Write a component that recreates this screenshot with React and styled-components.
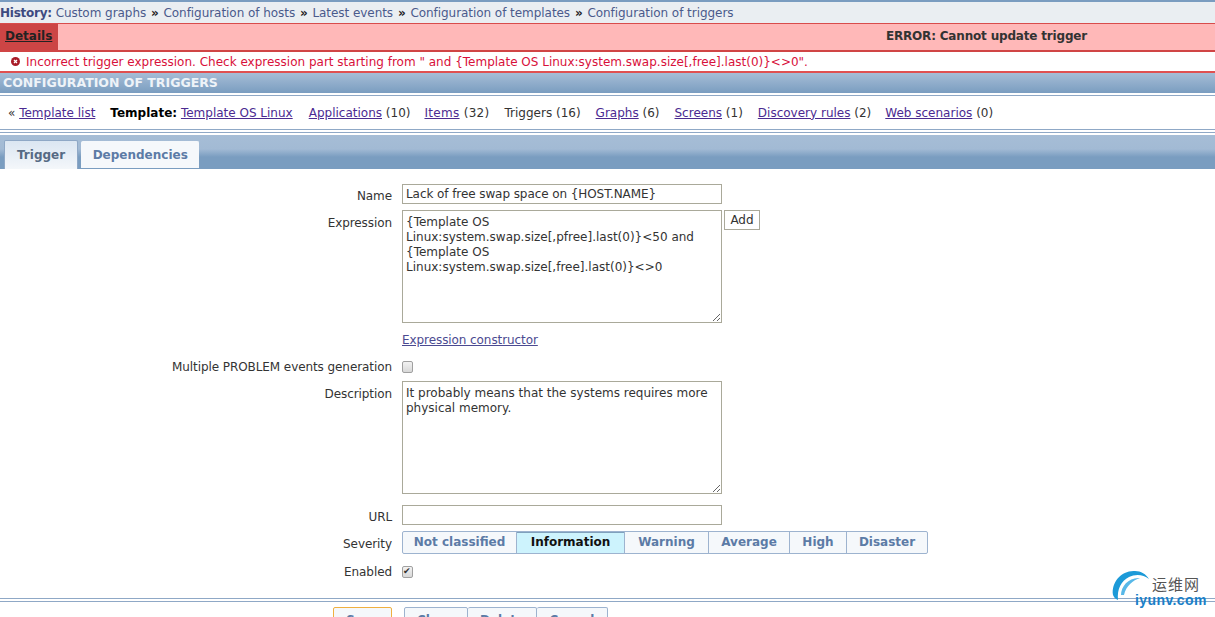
import styled, { createGlobalStyle } from "styled-components";

const GlobalStyle = createGlobalStyle`
    html, body {
        margin: 0;
        padding: 0;
        height: 617px;
        overflow: hidden;
        background: #fff;
    }
    body {
        font-family: "DejaVu Sans", Verdana, sans-serif;
        font-size: 12px;
        color: #333;
    }
`;

const Page = styled.div`
    position: relative;
    width: 1215px;
    height: 617px;
    overflow: hidden;
`;

const History = styled.div`
    height: 21px;
    border-top: 2px solid #7a9cc0;
    background: #eaeef2;
    display: flex;
    align-items: center;
    gap: 4.8px;
    color: #4a5a8c;
    white-space: nowrap;
    letter-spacing: -0.05px;
    b {
        color: #3d4a80;
        letter-spacing: -0.25px;
        margin-right: -1px;
    }
    i {
        font-style: normal;
        font-weight: bold;
        color: #222;
    }
`;

const ErrorBar = styled.div`
    height: 26px;
    display: flex;
    justify-content: space-between;
    align-items: stretch;
    background: #ffb8b8;
    border-top: 1px solid #d84c4c;
    border-bottom: 2px solid #d04545;
    font-weight: bold;
    color: #333;
`;

const Details = styled.a`
    width: 58px;
    box-sizing: border-box;
    padding-left: 5px;
    background: #cc4545;
    color: #222;
    line-height: 25px;
    text-decoration: underline;
`;

const ErrorTitle = styled.span`
    line-height: 25px;
    letter-spacing: -0.18px;
    margin-right: 128px;
`;

const ErrorMessage = styled.div`
    height: 19px;
    display: flex;
    align-items: center;
    gap: 6px;
    padding-left: 11px;
    border-bottom: 2px solid #e05050;
    color: #d8103a;
    white-space: nowrap;
`;

const Title = styled.div`
    height: 20px;
    padding-left: 3px;
    background: linear-gradient(#a6bdd6, #7a9dc0);
    color: #eef3f8;
    font-weight: bold;
    font-size: 12.5px;
    line-height: 19px;
`;

const Crumbs = styled.div`
    height: 33px;
    margin-top: 2px;
    border-top: 1px solid #8fa8c6;
    border-bottom: 1px solid #8fa8c6;
    display: flex;
    align-items: center;
    padding-left: 8px;
    color: #333;
    white-space: nowrap;
    a {
        color: #4b2a91;
        text-decoration: underline;
    }
`;

const CrumbGroup = styled.span`
    margin-right: ${props => props.$gap || 15}px;
    letter-spacing: ${props => props.$track || 0}px;
    b {
        color: #000;
    }
`;

const TabRule = styled.div`
    margin-top: 2px;
    margin-bottom: 2px;
    height: 1px;
    background: #8fa8c6;
`;

const TabBar = styled.div`
    height: 34px;
    background: linear-gradient(#a6bdd6 0, #a2bad4 14px, #7a9dc0 22px, #7a9dc0 100%);
    display: flex;
    align-items: flex-end;
    gap: 3px;
    padding-left: 4px;
    box-sizing: border-box;
`;

const Tab = styled.div`
    height: ${props => props.$active ? 29 : 27}px;
    margin-bottom: ${props => props.$active ? 0 : 1}px;
    box-sizing: border-box;
    padding: 0 ${props => props.$active ? 12 : 10.5}px;
    border-radius: 2px 2px 0 0;
    background: ${props => props.$active ? "linear-gradient(#dbe6f2, #f4f7fa)" : "#f5f8fb"};
    border: 1px solid ${props => props.$active ? "#8fa8c6" : "#f5f8fb"};
    border-bottom: none;
    color: ${props => props.$active ? "#566a84" : "#5c7ba6"};
    font-weight: bold;
    line-height: ${props => props.$active ? 28 : 26}px;
`;

const Form = styled.div`
    display: grid;
    grid-template-columns: 392px 1fr;
    column-gap: 10px;
    padding-top: 15px;
`;

const Label = styled.div`
    text-align: right;
    height: ${props => props.$h}px;
    padding-top: ${props => props.$top || 0}px;
    box-sizing: border-box;
    color: #333;
    white-space: nowrap;
    letter-spacing: -0.08px;
`;

const Cell = styled.div`
    height: ${props => props.$h}px;
    display: flex;
    align-items: flex-start;
`;

const TextInput = styled.input`
    width: 320px;
    height: 20px;
    box-sizing: border-box;
    border: 1px solid #aaa99a;
    padding: 0 3px;
    margin: 0;
    font: 12px "DejaVu Sans", Verdana, sans-serif;
    letter-spacing: -0.08px;
    color: #333;
    outline: none;
`;

const TextArea = styled.textarea`
    width: 320px;
    height: 113px;
    box-sizing: border-box;
    border: 1px solid #aaa99a;
    padding: 4px 3px;
    margin: 0;
    font: 12px/15px "DejaVu Sans", Verdana, sans-serif;
    color: #333;
    outline: none;
`;

const AddButton = styled.button`
    width: 36px;
    height: 20px;
    margin-left: 2px;
    padding: 0;
    box-sizing: border-box;
    background: #fff;
    border: 1px solid #aaa99a;
    font: 12px "DejaVu Sans", Verdana, sans-serif;
    color: #333;
`;

const ConstructorLink = styled.a`
    color: #4b4a91;
    text-decoration: underline;
    padding-top: 3px;
    letter-spacing: -0.08px;
`;

const Check = styled.input.attrs({ type: "checkbox" })`
    appearance: none;
    position: relative;
    width: 11px;
    height: 12px;
    box-sizing: border-box;
    margin: ${props => props.$top || 1}px 0 0;
    border: 1px solid #a0a0a0;
    border-radius: 2px;
    background: linear-gradient(#f2f2f2, #d8d8d8);
    &:checked::after {
        content: "✔";
        position: absolute;
        left: 0;
        top: -1px;
        font-size: 9px;
        line-height: 11px;
        color: #333;
    }
`;

const Segments = styled.div`
    display: flex;
    height: 23px;
    box-sizing: border-box;
    border: 1px solid #9db3cf;
    border-radius: 2px;
    background: #f5f8fb;
`;

const Segment = styled.div`
    width: ${props => props.$w}px;
    box-sizing: border-box;
    text-align: center;
    line-height: 20px;
    font-weight: bold;
    color: ${props => props.$active ? "#111" : "#5c7ba6"};
    background: ${props => props.$active ? "#cdf3fd" : "transparent"};
    border-right: 1px solid #9db3cf;
    ${props => props.$active && "box-shadow: inset 0 1px 0 #7fa0bc;"}
    &:last-child {
        border-right: none;
    }
`;

const FooterRule = styled.div`
    margin-top: 19px;
    height: 2px;
    border-top: 1px solid #8fa8c6;
    border-bottom: 1px solid #8fa8c6;
`;

const Footer = styled.div`
    display: flex;
    margin-top: 5px;
    padding-left: 333px;
`;

const FootButton = styled.div`
    height: 30px;
    width: ${props => props.$w}px;
    box-sizing: border-box;
    border: 1px solid ${props => props.$focus ? "#f0b040" : "#9db3cf"};
    border-left-width: ${props => props.$joined ? 0 : 1}px;
    margin-left: ${props => props.$space || 0}px;
    border-radius: 2px 2px 0 0;
    background: #f5f8fb;
    color: #5c7ba6;
    font-weight: bold;
    text-align: center;
    line-height: 24px;
`;

const Watermark = styled.div`
    position: absolute;
    left: 1111px;
    top: 569px;
    width: 104px;
    height: 44px;
`;

const WatermarkCn = styled.span`
    position: absolute;
    left: 41px;
    top: 4px;
    font: 15px "Noto Sans CJK SC", sans-serif;
    color: #555;
    letter-spacing: 1px;
    white-space: nowrap;
`;

const WatermarkEn = styled.span`
    position: absolute;
    left: 24px;
    top: 23px;
    font: bold 14px "Liberation Sans", Arial, sans-serif;
    color: #1a7fc8;
    letter-spacing: 0.4px;
    white-space: nowrap;
`;

const ErrorIcon = () => (
    <svg width="9" height="9" viewBox="0 0 9 9">
        <circle cx="4.5" cy="4.5" r="4.5" fill="#a81c28" />
        <path d="M3 3l3 3M6 3l-3 3" stroke="#fff" strokeWidth="1.3" />
    </svg>
);

const WatermarkLogo = () => (
    <svg width="44" height="44" viewBox="0 0 44 44" style={{ position: "absolute", left: 0, top: 0 }}>
        <path d="M2 26C0 13 11 1 24 2c6 0 11 3 14 8C32 5 24 5 18 8 10 12 6 20 7 31c-3-1-4-3-5-5z" fill="#1c9ad8" />
        <path d="M10 26C10 17 18 8 29 9c-7 2-14 8-16 17z" fill="#58b8e8" />
    </svg>
);

const crumbs = [
    ["Applications", "(10)", 14],
    ["Items", "(32)", 15, 0.3],
    [null, "Triggers (16)"],
    ["Graphs", "(6)"],
    ["Screens", "(1)"],
    ["Discovery rules", "(2)", 14],
    ["Web scenarios", "(0)"],
];

const severities = [
    ["Not classified", 114],
    ["Information", 108, true],
    ["Warning", 84],
    ["Average", 81],
    ["High", 57],
    ["Disaster", 80],
];

export default function App() {
    return (
        <Page>
            <GlobalStyle />
            <History>
                <b>History:</b>
                <span>Custom graphs</span><i>»</i>
                <span>Configuration of hosts</span><i>»</i>
                <span>Latest events</span><i>»</i>
                <span>Configuration of templates</span><i>»</i>
                <span>Configuration of triggers</span>
            </History>
            <ErrorBar>
                <Details>Details</Details>
                <ErrorTitle>ERROR: Cannot update trigger</ErrorTitle>
            </ErrorBar>
            <ErrorMessage>
                <ErrorIcon />
                {'Incorrect trigger expression. Check expression part starting from " and {Template OS Linux:system.swap.size[,free].last(0)}<>0".'}
            </ErrorMessage>
            <Title>CONFIGURATION OF TRIGGERS</Title>
            <Crumbs>
                <CrumbGroup>« <a>Template list</a></CrumbGroup>
                <CrumbGroup $gap={16}><b>Template:</b> <a>Template OS Linux</a></CrumbGroup>
                {crumbs.map(([link, rest, gap, track]) => (
                    <CrumbGroup key={rest} $gap={gap} $track={track}>{link && <a>{link}</a>} {rest}</CrumbGroup>
                ))}
            </Crumbs>
            <TabRule />
            <TabBar>
                <Tab $active>Trigger</Tab>
                <Tab>Dependencies</Tab>
            </TabBar>
            <Form>
                <Label $h={26} $top={5}>Name</Label>
                <Cell $h={26}><TextInput defaultValue="Lack of free swap space on {HOST.NAME}" /></Cell>

                <Label $h={120} $top={6}>Expression</Label>
                <Cell $h={120}>
                    <TextArea defaultValue={"{Template OS Linux:system.swap.size[,pfree].last(0)}<50 and {Template OS Linux:system.swap.size[,free].last(0)}<>0"} />
                    <AddButton>Add</AddButton>
                </Cell>

                <Label $h={30} />
                <Cell $h={30}><ConstructorLink>Expression constructor</ConstructorLink></Cell>

                <Label $h={21}>Multiple PROBLEM events generation</Label>
                <Cell $h={21}><Check /></Cell>

                <Label $h={124} $top={6}>Description</Label>
                <Cell $h={124}>
                    <TextArea defaultValue="It probably means that the systems requires more physical memory." />
                </Cell>

                <Label $h={26} $top={5}>URL</Label>
                <Cell $h={26}><TextInput /></Cell>

                <Label $h={28} $top={6}>Severity</Label>
                <Cell $h={28}>
                    <Segments>
                        {severities.map(([name, w, active]) => (
                            <Segment key={name} $w={w} $active={active}>{name}</Segment>
                        ))}
                    </Segments>
                </Cell>

                <Label $h={20} $top={6}>Enabled</Label>
                <Cell $h={20}><Check defaultChecked $top={7} /></Cell>
            </Form>
            <FooterRule />
            <Footer>
                <FootButton $w={59} $focus>Save</FootButton>
                <FootButton $w={64} $space={12}>Clone</FootButton>
                <FootButton $w={69} $joined>Delete</FootButton>
                <FootButton $w={71} $joined>Cancel</FootButton>
            </Footer>
            <Watermark>
                <WatermarkLogo />
                <WatermarkCn>运维网</WatermarkCn>
                <WatermarkEn>iyunv.com</WatermarkEn>
            </Watermark>
        </Page>
    );
}
